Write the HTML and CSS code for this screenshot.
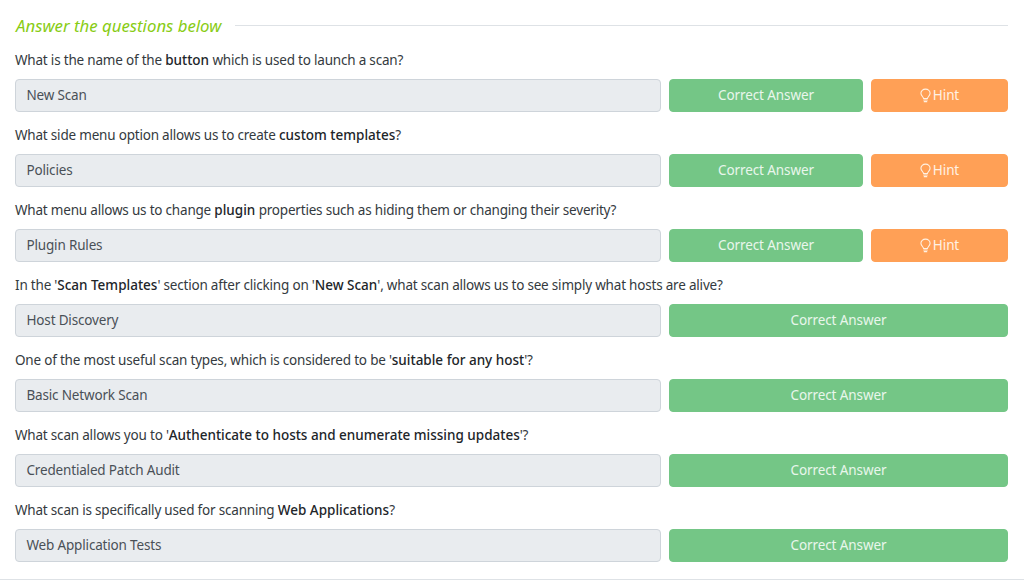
FILE: index.html
```html
<!DOCTYPE html>
<html lang="en">
<head>
<meta charset="utf-8">
<title>Answer the questions below</title>
<link rel="stylesheet" href="styles.css">
</head>
<body>
<main class="panel">
  <div class="heading"><h2 class="heading-title">Answer the questions below</h2><span class="heading-rule"></span></div>

  <section class="question">
    <p class="question-text">What is the name of the <b>button</b> which is used to launch a scan?</p>
    <div class="answer-row">
      <div class="answer">New Scan</div>
      <button class="btn btn-correct">Correct Answer</button>
      <button class="btn btn-hint"><svg class="bulb" viewBox="0 0 12 16" aria-hidden="true"><path d="M3.9 11.2C3.6 9.4 1 8.2 1 5.6 1 3 3.2 1 6 1s5 2 5 4.6c0 2.6-2.6 3.8-2.9 5.6z"/><path d="M4.1 12.9h3.8M4.6 14.7h2.8"/></svg>Hint</button>
    </div>
  </section>

  <section class="question">
    <p class="question-text">What side menu option allows us to create <b>custom templates</b>?</p>
    <div class="answer-row">
      <div class="answer">Policies</div>
      <button class="btn btn-correct">Correct Answer</button>
      <button class="btn btn-hint"><svg class="bulb" viewBox="0 0 12 16" aria-hidden="true"><path d="M3.9 11.2C3.6 9.4 1 8.2 1 5.6 1 3 3.2 1 6 1s5 2 5 4.6c0 2.6-2.6 3.8-2.9 5.6z"/><path d="M4.1 12.9h3.8M4.6 14.7h2.8"/></svg>Hint</button>
    </div>
  </section>

  <section class="question">
    <p class="question-text">What menu allows us to change <b>plugin</b> properties such as hiding them or changing their severity?</p>
    <div class="answer-row">
      <div class="answer">Plugin Rules</div>
      <button class="btn btn-correct">Correct Answer</button>
      <button class="btn btn-hint"><svg class="bulb" viewBox="0 0 12 16" aria-hidden="true"><path d="M3.9 11.2C3.6 9.4 1 8.2 1 5.6 1 3 3.2 1 6 1s5 2 5 4.6c0 2.6-2.6 3.8-2.9 5.6z"/><path d="M4.1 12.9h3.8M4.6 14.7h2.8"/></svg>Hint</button>
    </div>
  </section>

  <section class="question">
    <p class="question-text">In the '<b>Scan Templates</b>' section after clicking on '<b>New Scan</b>', what scan allows us to see simply what hosts are alive?</p>
    <div class="answer-row">
      <div class="answer">Host Discovery</div>
      <button class="btn btn-correct">Correct Answer</button>
    </div>
  </section>

  <section class="question">
    <p class="question-text">One of the most useful scan types, which is considered to be '<b>suitable for any host</b>'?</p>
    <div class="answer-row">
      <div class="answer">Basic Network Scan</div>
      <button class="btn btn-correct">Correct Answer</button>
    </div>
  </section>

  <section class="question">
    <p class="question-text">What scan allows you to '<b>Authenticate to hosts and enumerate missing updates</b>'?</p>
    <div class="answer-row">
      <div class="answer">Credentialed Patch Audit</div>
      <button class="btn btn-correct">Correct Answer</button>
    </div>
  </section>

  <section class="question">
    <p class="question-text">What scan is specifically used for scanning <b>Web Applications</b>?</p>
    <div class="answer-row">
      <div class="answer">Web Application Tests</div>
      <button class="btn btn-correct">Correct Answer</button>
    </div>
  </section>
</main>
</body>
</html>
```
FILE: styles.css
```css
* { box-sizing: border-box; }
html, body { margin: 0; height: 580px; overflow: hidden; background: #fff; }
body { font-family: "Noto Sans", "Open Sans", sans-serif; color: #343a40; border-bottom: 1px solid #dee2e6; }
.panel { display: flex; flex-direction: column; padding: 15px 16px 0 15px; }
.heading { display: flex; align-items: center; gap: 14px; height: 21px; margin-bottom: 14px; }
.heading-title { margin: 0 0 0 1px; font-size: 16.8px; line-height: 21px; font-weight: 400; font-style: italic; color: #88cc14; white-space: nowrap; }
.heading-rule { flex: 1; height: 1px; background: #dee2e6; }
.question { display: flex; flex-direction: column; height: 75px; }
.question-text { margin: 1px 0 9px; font-size: 13.5px; line-height: 19px; height: 19px; letter-spacing: -.2px; white-space: nowrap; color: #343a40; }
.question-text b { font-weight: 500; letter-spacing: 0; color: #212529; }
.answer-row { display: flex; gap: 8px; height: 33px; }
.answer { flex: 0 0 646px; display: flex; align-items: center; padding: 0 11px 1px 10.5px; font-size: 13.5px; letter-spacing: -.17px; color: #495057; background: #e9ecef; border: 1px solid #ced4da; border-radius: 4px; }
.btn { flex: 1; display: flex; align-items: center; justify-content: center; padding: 0 0 1px; font: inherit; font-size: 13.5px; letter-spacing: -.1px; color: #fff; border: 1px solid transparent; border-radius: 4px; }
.btn-correct { background: #74c686; border-color: #74c686; color: #e9f6ec; }
.btn-hint { flex: 0 0 137px; gap: 2px; background: #ffa056; border-color: #ffa056; color: #fff1e4; }
.bulb { width: 11px; height: 15px; fill: none; stroke: #fff1e4; stroke-width: 1.2; stroke-linecap: round; }
```
